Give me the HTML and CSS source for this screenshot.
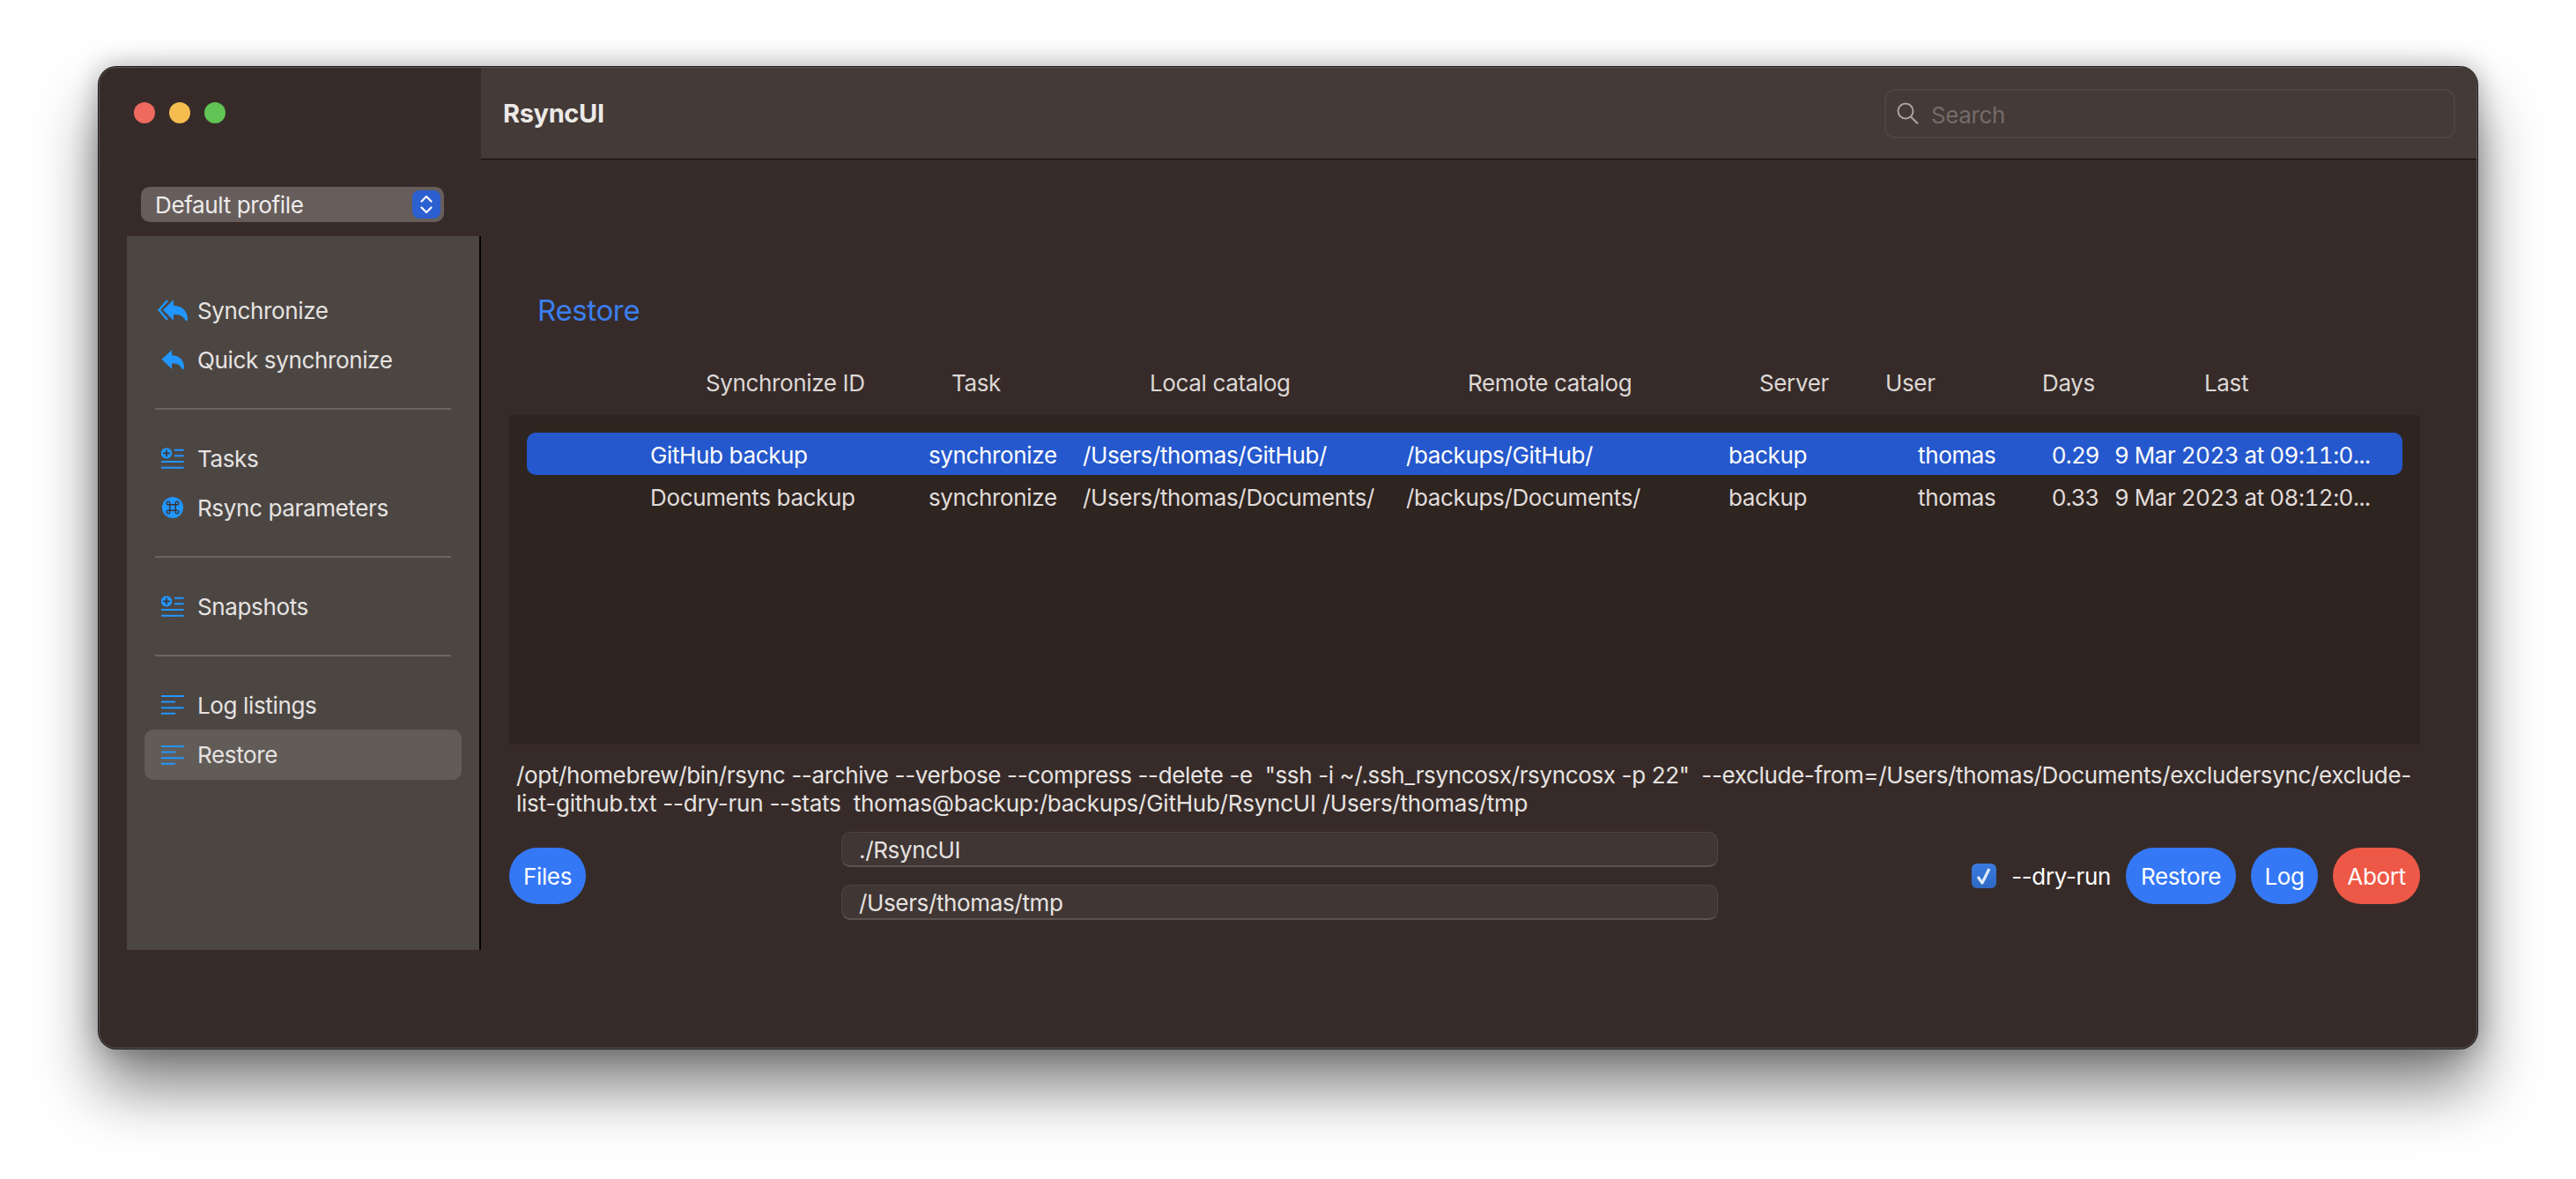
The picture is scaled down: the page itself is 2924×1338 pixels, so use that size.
FILE: index.html
```html
<!DOCTYPE html>
<html>
<head>
    <title>RsyncUI</title>
    <link rel="stylesheet" href="styles.css">
</head>
<body>
    <svg class="defs" width="0" height="0">
        <symbol id="iconList" viewBox="0 0 26 24">
            <circle cx="6" cy="6.400" r="6.200" fill="#2196ff"/>
            <path d="M6 2.600v7.600M2.200 6.400h7.600" stroke="#3a3432" stroke-width="1.600" fill="none"/>
            <path d="M15 2.700h10.600M15 9.300h10.600M0 16h25.600M0 22.700h25.600" stroke="#2196ff" stroke-width="2" fill="none"/>
        </symbol>
        <symbol id="iconLog" viewBox="0 0 26 24">
            <path d="M0 2h25.600M0 8.600h16M0 15.200h25.600M0 21.800h16" stroke="#2196ff" stroke-width="2" fill="none"/>
        </symbol>
    </svg>

    <div class="window">
        <div class="side">
            <div class="lights">
                <span class="light red"></span>
                <span class="light yellow"></span>
                <span class="light green"></span>
            </div>
            <div class="picker">
                <span>Default profile</span>
                <span class="picker-btn">
                    <svg width="16" height="24" viewBox="0 0 16 24"><path d="M2.500 8.500 8 3l5.500 5.500M2.500 15.500 8 21l5.500-5.500" stroke="#fff" stroke-width="2.200" stroke-linecap="round" stroke-linejoin="round" fill="none"/></svg>
                </span>
            </div>
            <div class="nav">
                <div class="nav-item">
                    <svg class="icon icon-wide" viewBox="0 0 34 24">
                        <path d="M11 1 1.500 11.800 11 23" stroke="#2196ff" stroke-width="2.400" stroke-linejoin="round" fill="none"/>
                        <path d="M18 .300 6 11.800 18 23.700v-6.700c6-.5 11 1.200 13.500 6.700H34c.5-10-5.500-16.500-16-16.900z" fill="#2196ff"/>
                    </svg>
                    Synchronize
                </div>
                <div class="nav-item">
                    <svg class="icon" viewBox="0 0 28 24"><path d="M13 .300 .500 11.800 13 23.700v-6.700c6-.5 10 1.200 12.500 6.700H28c.5-10-4.500-16.500-15-16.900z" fill="#2196ff"/></svg>
                    Quick synchronize
                </div>
                <div class="nav-line"></div>
                <div class="nav-item">
                    <svg class="icon" viewBox="0 0 26 24"><use href="#iconList"/></svg>
                    Tasks
                </div>
                <div class="nav-item">
                    <svg class="icon" viewBox="0 0 26 26">
                        <circle cx="13" cy="13" r="13" fill="#2196ff"/>
                        <path d="M9.500 9.500h7v7h-7zM9.500 9.500H8a2 2 0 1 1 1.500-1.500zM16.500 9.500V8A2 2 0 1 1 18 9.500zM16.500 16.500H18A2 2 0 1 1 16.500 18zM9.500 16.500V18A2 2 0 1 1 8 16.500z" stroke="#3a3432" stroke-width="1.500" fill="none"/>
                    </svg>
                    Rsync parameters
                </div>
                <div class="nav-line"></div>
                <div class="nav-item">
                    <svg class="icon" viewBox="0 0 26 24"><use href="#iconList"/></svg>
                    Snapshots
                </div>
                <div class="nav-line"></div>
                <div class="nav-item">
                    <svg class="icon" viewBox="0 0 26 24"><use href="#iconLog"/></svg>
                    Log listings
                </div>
                <div class="nav-item selected">
                    <svg class="icon" viewBox="0 0 26 24"><use href="#iconLog"/></svg>
                    Restore
                </div>
            </div>
        </div>

        <div class="main">
            <div class="titlebar">
                <div class="app-title">RsyncUI</div>
                <div class="search">
                    <svg width="26" height="25" viewBox="0 0 26 25"><circle cx="10" cy="10" r="8.500" stroke="#a8a2a0" stroke-width="2" fill="none"/><path d="m16 16.500 8 8" stroke="#a8a2a0" stroke-width="2.200" fill="none"/></svg>
                    <span class="search-text">Search</span>
                </div>
            </div>

            <div class="content">
                <h1 class="heading">Restore</h1>

                <div class="thead">
                    <span>Synchronize ID</span>
                    <span>Task</span>
                    <span>Local catalog</span>
                    <span>Remote catalog</span>
                    <span>Server</span>
                    <span>User</span>
                    <span>Days</span>
                    <span>Last</span>
                </div>

                <div class="tbody">
                    <div class="row active">
                        <span>GitHub backup</span>
                        <span>synchronize</span>
                        <span>/Users/thomas/GitHub/</span>
                        <span>/backups/GitHub/</span>
                        <span>backup</span>
                        <span>thomas</span>
                        <span>0.29</span>
                        <span class="date">9 Mar 2023 at 09:11:0...</span>
                    </div>
                    <div class="row">
                        <span>Documents backup</span>
                        <span>synchronize</span>
                        <span>/Users/thomas/Documents/</span>
                        <span>/backups/Documents/</span>
                        <span>backup</span>
                        <span>thomas</span>
                        <span>0.33</span>
                        <span class="date">9 Mar 2023 at 08:12:0...</span>
                    </div>
                </div>

                <div class="command">/opt/homebrew/bin/rsync --archive --verbose --compress --delete -e  "ssh -i ~/.ssh_rsyncosx/rsyncosx -p 22"  --exclude-from=/Users/thomas/Documents/excludersync/exclude-<br><span class="command-tail">list-github.txt --dry-run --stats  thomas@backup:/backups/GitHub/RsyncUI /Users/thomas/tmp</span></div>

                <div class="actions">
                    <button class="btn files">Files</button>
                    <div class="fields">
                        <div class="field">./RsyncUI</div>
                        <div class="field">/Users/thomas/tmp</div>
                    </div>
                    <div class="right">
                        <span class="check">
                            <svg width="20" height="22" viewBox="0 0 20 22"><path d="m3 12 5 7L16 3" stroke="#dfe9f8" stroke-width="3.200" stroke-linejoin="round" fill="none"/></svg>
                        </span>
                        <span class="check-label">--dry-run</span>
                        <button class="btn restore">Restore</button>
                        <button class="btn log">Log</button>
                        <button class="btn abort">Abort</button>
                    </div>
                </div>
            </div>
        </div>
    </div>
</body>
</html>
```

FILE: styles.css
```css
* {
    box-sizing: border-box;
}
html, body {
    height: 100%;
}
body {
    margin: 0;
    padding: 76px 0 0 112px;
    background-color: #fff;
    font-family: Inter, "Liberation Sans", sans-serif;
    font-size: 26px;
    letter-spacing: -0.36px;
    color: #e6e3e1;
    overflow: hidden;
}
.defs {
    position: absolute;
}
.window {
    display: flex;
    width: 2700px;
    height: 1114px;
    background-color: #372b29;
    border: 1px solid #5d5452;
    border-radius: 20px;
    overflow: hidden;
    box-shadow: 0 0 0 1px #1c1716, 0 0 30px rgba(0, 0, 0, 0.3), 0 44px 70px rgba(0, 0, 0, 0.5);
}

/* left column */
.side {
    flex: 0 0 433px;
    padding-top: 39px;
}
.lights {
    display: flex;
    gap: 16px;
    padding-left: 39px;
}
.light {
    width: 24px;
    height: 24px;
    border-radius: 50%;
}
.red { background-color: #ee6a5f; }
.yellow { background-color: #f5bd4f; }
.green { background-color: #61c454; }
.picker {
    display: flex;
    align-items: center;
    justify-content: space-between;
    width: 344px;
    height: 40px;
    margin: 72px 0 16px 47px;
    padding: 0 4px 0 16px;
    background-color: #675e5c;
    border-radius: 10px;
    color: #eeeceb;
}
.picker-btn {
    display: flex;
    align-items: center;
    justify-content: center;
    width: 32px;
    height: 32px;
    background-color: #2c5fcf;
    border-radius: 8px;
}
.nav {
    width: 402px;
    height: 810px;
    margin-left: 31px;
    padding-top: 56px;
    background-color: #4c4643;
    border-right: 2px solid #000;
}
.nav-item {
    display: flex;
    align-items: center;
    height: 56px;
    margin: 0 20px;
    padding-left: 19px;
}
.nav-item.selected {
    height: 57px;
    background-color: #625c58;
    border-radius: 10px;
}
.icon {
    flex: none;
    width: 26px;
    height: 24px;
    margin-right: 15px;
}
.icon-wide {
    width: 34px;
    margin-left: -4px;
    margin-right: 11px;
}
.nav-line {
    height: 2px;
    margin: 27px 32px;
    background-color: #6b6461;
}

/* right column */
.main {
    flex: 1;
    display: flex;
    flex-direction: column;
}
.titlebar {
    display: flex;
    align-items: center;
    justify-content: space-between;
    flex: 0 0 104px;
    padding: 0 24px 0 25px;
    background-color: #443a37;
    border-bottom: 1px solid #120e0d;
}
.app-title {
    font-size: 29px;
    font-weight: 700;
    color: #ece9e7;
}
.search {
    display: flex;
    align-items: center;
    gap: 13px;
    width: 648px;
    height: 56px;
    padding-left: 12px;
    border: 2px solid #4e4543;
    border-radius: 12px;
    color: #746c6a;
}
.search-text {
    padding-top: 3px;
}
.content {
    flex: 1;
    padding: 151px 64px 0 32px;
}
.heading {
    margin: 0 0 43px 32px;
    font-size: 33px;
    line-height: 40px;
    font-weight: 400;
    color: #3b7ff0;
}
.thead {
    display: grid;
    grid-template-columns: 279px 225px 361px 331px 143px 178px 184px 1fr;
    padding-left: 223px;
    margin-bottom: 16px;
    line-height: 40px;
    color: #dcd8d5;
}
.tbody {
    height: 374px;
    padding: 20px 20px 0 20px;
    background-color: #2e2420;
}
.row {
    display: grid;
    grid-template-columns: 316px 175px 367px 366px 215px 152px 71px 1fr;
    align-items: center;
    height: 48px;
    padding: 2px 0 0 140px;
    border-radius: 10px;
    white-space: nowrap;
    color: #e0dcda;
}
.row.active {
    background-color: #2558cd;
    color: #fff;
}
.date {
    font-variant-numeric: tabular-nums;
    letter-spacing: -0.5px;
}
.command {
    margin-top: 19px;
    padding-left: 8px;
    line-height: 32px;
    white-space: pre-wrap;
}
.command-tail {
    letter-spacing: -0.24px;
}
.actions {
    display: flex;
    align-items: center;
    margin-top: 16px;
}
.fields {
    display: flex;
    flex-direction: column;
    gap: 20px;
    width: 995px;
    margin-left: 290px;
}
.field {
    height: 40px;
    padding: 1px 0 0 19px;
    line-height: 38px;
    background-color: #403634;
    border: 1px solid #4e4543;
    border-bottom: 2px solid #5c5351;
    border-radius: 10px;
}
.right {
    display: flex;
    align-items: center;
    margin-left: auto;
}
.check {
    display: flex;
    align-items: center;
    justify-content: center;
    width: 28px;
    height: 28px;
    background: linear-gradient(#3a7ae0, #2f68c4);
    border-radius: 6px;
}
.check-label {
    margin: 0 17px;
    color: #fff;
}
.btn {
    height: 64px;
    padding: 0;
    border: none;
    border-radius: 32px;
    background-color: #3478f6;
    color: #fff;
    font: inherit;
    letter-spacing: inherit;
}
.files { width: 87px; }
.restore { width: 125px; }
.log {
    width: 76px;
    margin-left: 17px;
}
.abort {
    width: 99px;
    margin-left: 17px;
    background-color: #ee5847;
}
```
